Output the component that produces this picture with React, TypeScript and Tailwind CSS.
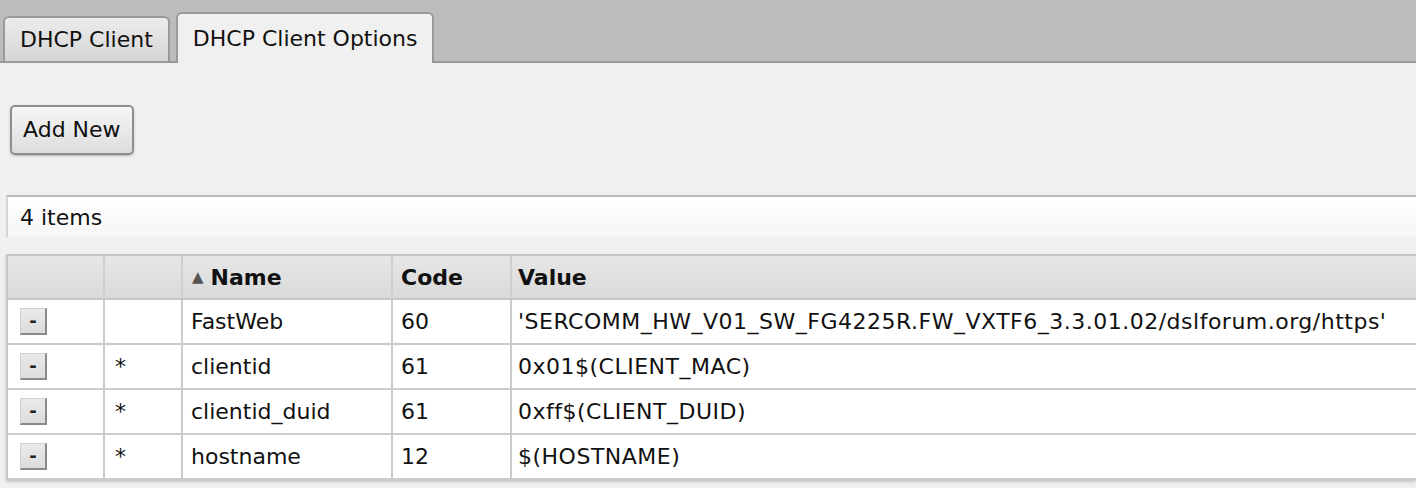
import React from 'react';

const rows = [
  { req: '', name: 'FastWeb', code: '60', value: "'SERCOMM_HW_V01_SW_FG4225R.FW_VXTF6_3.3.01.02/dslforum.org/https'" },
  { req: '*', name: 'clientid', code: '61', value: '0x01$(CLIENT_MAC)' },
  { req: '*', name: 'clientid_duid', code: '61', value: '0xff$(CLIENT_DUID)' },
  { req: '*', name: 'hostname', code: '12', value: '$(HOSTNAME)' },
];

const cols = 'grid grid-cols-[97px_78px_210px_119px_1fr]';

export default function App() {
  return (
    <div className="w-[1416px] h-[488px] overflow-hidden bg-[#f0f0f0] text-[22px] text-[#111] font-['DejaVu_Sans',Verdana,sans-serif]">
      {/* Tab bar */}
      <div className="h-[63px] bg-[#bcbcbc] border-b-2 border-[#9a9a9a] flex items-end pl-[3px] gap-[6px]">
        <div className="h-[45px] px-[15px] pt-[8px] border-2 border-b-0 border-[#9a9a9a] rounded-t-[6px] bg-gradient-to-b from-[#ececec] to-[#d6d6d6] leading-[28px]">
          DHCP Client
        </div>
        <div className="h-[51px] -mb-[2px] px-[15px] pt-[11px] border-2 border-b-0 border-[#9a9a9a] rounded-t-[6px] bg-[#f0f0f0] leading-[28px]">
          DHCP Client Options
        </div>
      </div>

      {/* Toolbar */}
      <div className="pt-[42px] pl-[10px]">
        <button className="h-[50px] px-[11px] border-2 border-[#8f8f8f] rounded-[5px] bg-gradient-to-b from-[#f6f6f6] to-[#dddddd] shadow-[0_1px_2px_rgba(0,0,0,0.25)] leading-none">
          Add New
        </button>
      </div>

      {/* Item count */}
      <div className="mt-[40px] ml-[6px] h-[42px] border-t-2 border-l-2 border-[#bababa] border-l-[#d4d4d4] bg-gradient-to-b from-[#ffffff] to-[#f6f6f6] flex items-center pl-[12px]">
        4 items
      </div>

      {/* Table */}
      <div className="mt-[17px] ml-[6px] border-t-2 border-l-2 border-[#c6c6c6] bg-white shadow-[0_2px_3px_rgba(0,0,0,0.18)]">
        <div className={`${cols} h-[44px] border-b-2 border-[#c6c6c6] bg-gradient-to-b from-[#e6e6e6] to-[#dadada] font-bold`}>
          <div className="border-r-2 border-[#cfcfcf]" />
          <div className="border-r-2 border-[#cfcfcf]" />
          <div className="border-r-2 border-[#cfcfcf] flex items-center pl-[9px] gap-[7px]">
            <span className="text-[15px] text-[#555] font-normal">▲</span>
            <span>Name</span>
          </div>
          <div className="border-r-2 border-[#cfcfcf] flex items-center pl-[8px]">Code</div>
          <div className="flex items-center pl-[6px]">Value</div>
        </div>
        {rows.map((r, i) => (
          <div key={i} className={`${cols} h-[45px] border-b-2 border-[#cbcbcb]`}>
            <div className="border-r-2 border-[#cbcbcb] flex items-center pl-[12px]">
              <button className="w-[27px] h-[27px] flex items-center justify-center text-[18px] font-bold text-[#222] leading-none bg-gradient-to-b from-[#eaeaea] to-[#dcdcdc] border border-[#d0d0d0] border-r-2 border-b-2 border-r-[#8a8a8a] border-b-[#8a8a8a]">
                -
              </button>
            </div>
            <div className="border-r-2 border-[#cbcbcb] flex items-center pl-[10px]">{r.req}</div>
            <div className="border-r-2 border-[#cbcbcb] flex items-center pl-[8px]">{r.name}</div>
            <div className="border-r-2 border-[#cbcbcb] flex items-center pl-[8px]">{r.code}</div>
            <div className="flex items-center pl-[6px] whitespace-nowrap tracking-[0.5px]">{r.value}</div>
          </div>
        ))}
      </div>
    </div>
  );
}
